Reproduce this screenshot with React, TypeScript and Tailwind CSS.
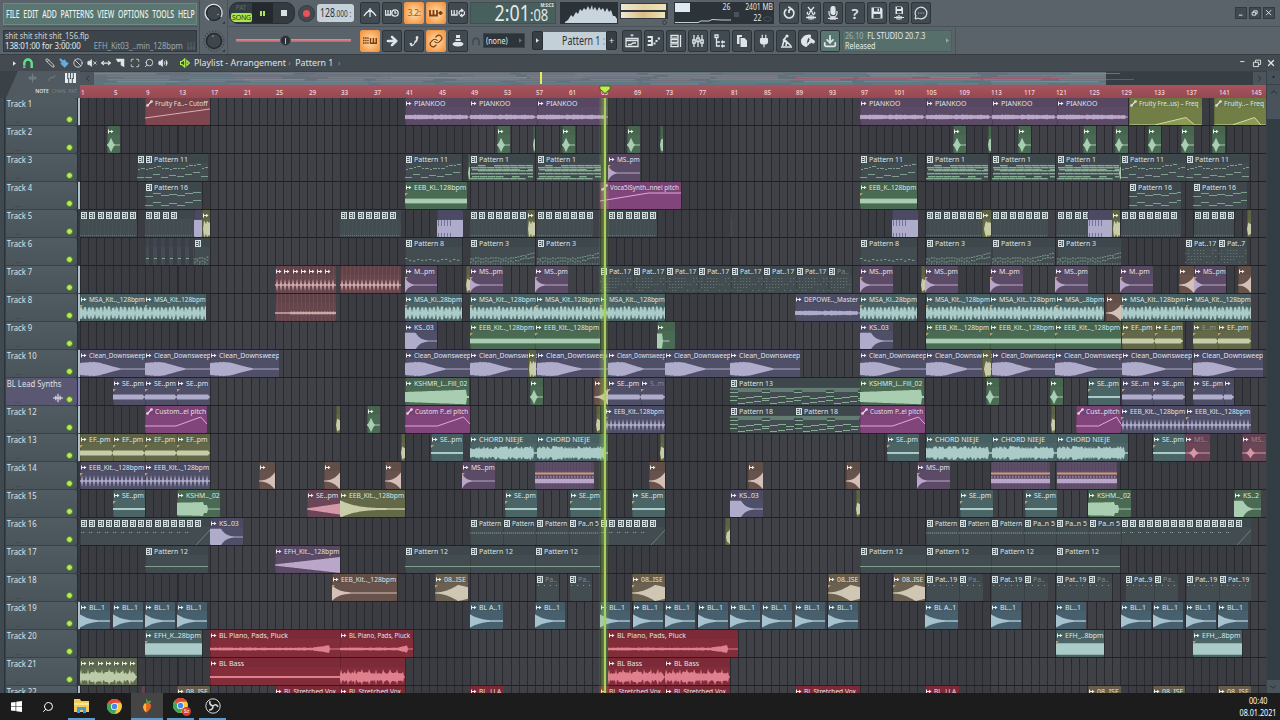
import { ReactNode } from 'react'
import clsx from 'clsx'
import {
  ArrowRight, Ban, ChevronDown, ChevronLeft, ChevronRight, ChevronUp, Download,
  Link, Maximize, MessageCircleMore, MoveHorizontal, Paintbrush, Pencil, Plug,
  Pointer, Search, VolumeX, Volume2, X,
} from 'lucide-react'

type Color = 'pat' | 'violet' | 'lav' | 'green' | 'teal' | 'olive' | 'moss' | 'brown' | 'sand' | 'magenta' | 'red' | 'steel' | 'rose' | 'dusk' | 'plum' | 'lime'
// x, width, colour, shape, label, number of icons
type Clip = [number, number, Color, string, string?, number?]

const ORIGIN = 80

const BG: Record<Color, string> = {
  pat: 'bg-[#424c51]',
  violet: 'bg-[#5c4b66]',
  lav: 'bg-[#504f68]',
  green: 'bg-[#4b6a53]',
  teal: 'bg-[#4b6567]',
  olive: 'bg-[#636849]',
  moss: 'bg-[#606c51]',
  brown: 'bg-[#67534b]',
  sand: 'bg-[#6b6151]',
  magenta: 'bg-[#81457c]',
  red: 'bg-[#832d3b]',
  steel: 'bg-[#48606d]',
  rose: 'bg-[#7f464f]',
  dusk: 'bg-[#66464c]',
  plum: 'bg-[#6b4656]',
  lime: 'bg-[#717e45]',
}

const INK: Record<Color, string> = {
  pat: '#86a893',
  violet: '#b9a6c8',
  lav: '#aeabcb',
  green: '#a8cdb0',
  teal: '#abcbc8',
  olive: '#c8cca8',
  moss: '#bccaa8',
  brown: '#d4c0b6',
  sand: '#cfc6b4',
  magenta: '#dcaadb',
  red: '#e0808e',
  steel: '#a6c2cf',
  rose: '#dcaeb2',
  dusk: '#cfa8aa',
  plum: '#d498a8',
  lime: '#d5dba8',
}

const P11 = 'Pattern 11'
const P12 = 'Pattern 12'
const EEB = 'EEB_Kit.._128bpm'
const MSA = 'MSA_Kit.._128bpm'
const CLEAN = 'Clean_Downsweep'
const PIANO = 'BL Piano, Pads, Pluck'
const VOX = 'BL Stretched Vox'

const greens = (xs: number[]): Clip[] => xs.map((x) => [x, 13, 'green', 'burst', ''])
const slivers = (xs: number[]): Clip[] => xs.map((x) => [x, 4, 'olive', 'sliver'])
const same = (xs: [number, number][], c: Color, s: string, label: string): Clip[] => xs.map(([x, w]) => [x, w, c, s, label])

const tracks: { name: string; lit?: boolean; clips: Clip[] }[] = [
  {
    name: 'Track 1', lit: true,
    clips: [
      [145, 65, 'rose', 'ramp', 'Fruity Fa..– Cutoff'],
      ...same([[405, 65], [470, 67], [537, 71], [860, 66], [926, 66], [992, 65], [1057, 71]], 'violet', 'band', 'PIANKOO'),
      [1129, 73, 'lime', 'peak', 'Fruity Fre..us) – Freq'],
      [1214, 52, 'lime', 'peak', 'Fruity..– Freq'],
    ],
  },
  {
    name: 'Track 2',
    clips: [
      ...greens([107, 497, 562, 627, 953, 1018, 1083, 1115, 1148, 1181, 1212]),
      [533, 2, 'green', 'sliver'], [660, 3, 'green', 'sliver'], [988, 3, 'green', 'sliver'],
    ],
  },
  {
    name: 'Track 3',
    clips: [
      [137, 8, 'pat', 'melody', '', 1],
      ...same([[145, 63], [405, 57], [860, 57], [1121, 65], [1186, 63]], 'pat', 'melody', P11),
      [468, 2, 'green', 'sliver'], [1119, 2, 'green', 'sliver'],
      ...same([[470, 63], [537, 64], [926, 62], [992, 63], [1057, 62]], 'pat', 'chords', 'Pattern 1'),
      [608, 32, 'violet', 'decay', 'MS..pm'],
    ],
  },
  {
    name: 'Track 4', lit: true,
    clips: [
      ...same([[145, 57], [1129, 52], [1193, 54]], 'pat', 'waltz', 'Pattern 16'),
      [405, 62, 'green', 'comb2', 'EEB_Ki..128bpm'],
      [600, 81, 'magenta', 'rise', 'Voca5lSynth..nnel pitch'],
      [860, 57, 'green', 'comb2', 'EEB_K..128bpm'],
    ],
  },
  {
    name: 'Track 5',
    clips: [
      [80, 57, 'pat', 'steps', '', 7], [145, 49, 'pat', 'steps', '', 4], [194, 8, 'lav', 'full'], [202, 8, 'olive', 'sliver', ''],
      [340, 61, 'pat', 'steps', '', 7], [437, 26, 'lav', 'full'], [470, 57, 'pat', 'steps', '', 7], [527, 8, 'olive', 'sliver', ''],
      [537, 56, 'pat', 'steps', '', 7], [608, 49, 'pat', 'steps', '', 6], [730, 2, 'pat', 'none'], [892, 26, 'lav', 'full'],
      [926, 56, 'pat', 'steps', '', 7], [982, 9, 'olive', 'sliver', ''], [992, 56, 'pat', 'steps', '', 7], [1057, 31, 'pat', 'steps', '', 4],
      [1088, 24, 'lav', 'full'], [1112, 8, 'olive', 'sliver', ''], [1121, 60, 'pat', 'steps', '', 7], [1194, 40, 'pat', 'steps', '', 5],
      [1247, 4, 'olive', 'sliver'],
    ],
  },
  {
    name: 'Track 6',
    clips: [
      [145, 49, 'pat', 'stripes'], [194, 16, 'pat', 'arp', '', 1],
      [405, 57, 'pat', 'low', 'Pattern 8'], [860, 57, 'pat', 'low', 'Pattern 8'],
      ...same([[470, 65], [537, 63], [926, 65], [992, 63], [1057, 64]], 'pat', 'arp', 'Pattern 3'),
      [1185, 33, 'pat', 'dots', 'Pat..17'], [1218, 29, 'pat', 'dots', 'Pat..7'],
    ],
  },
  {
    name: 'Track 7', lit: true,
    clips: [
      [275, 61, 'dusk', 'ticks', '', 7], [340, 61, 'dusk', 'ticks'],
      [405, 32, 'violet', 'decay', 'M..pm'], ...slivers([466, 921]),
      ...same([[470, 33], [535, 33], [860, 33], [925, 33], [1055, 33], [1194, 32]], 'violet', 'decay', 'MS..pm'),
      ...same([[990, 33], [1120, 33]], 'violet', 'decay', 'M..pm'),
      ...same([[600, 33], [633, 33], [666, 32], [698, 33], [731, 32], [763, 33], [796, 32]], 'pat', 'dots', 'Pat..17'),
      [828, 24, 'pat', 'dots', '~Pa..'],
      [1179, 15, 'brown', 'grow', ''], [1238, 13, 'brown', 'grow', ''],
    ],
  },
  {
    name: 'Track 8', lit: true,
    clips: [
      ...same([[80, 65], [470, 66], [600, 65], [926, 64], [1186, 65]], 'teal', 'drum', MSA),
      ...same([[145, 61], [536, 64], [990, 66], [1121, 65]], 'teal', 'drum', 'MSA_Kit..128bpm'),
      ...same([[405, 57], [860, 57]], 'teal', 'drum', 'MSA_Ki..28bpm'),
      [275, 61, 'dusk', 'beads'], [795, 65, 'lav', 'band', 'DEPOWE.._Master'],
      [1056, 48, 'teal', 'drum', 'MSA_..8bpm'], [1106, 15, 'brown', 'grow', ''],
    ],
  },
  {
    name: 'Track 9',
    clips: [
      [405, 32, 'lav', 'blob', 'KS..03'], [860, 33, 'lav', 'blob', 'KS..03'],
      ...same([[470, 65], [535, 65], [926, 64], [990, 65], [1055, 66]], 'green', 'comb2', EEB),
      [657, 18, 'green', 'hit', ''],
      [1122, 33, 'olive', 'comb', 'EF..pm'], [1155, 28, 'olive', 'comb', 'E..pm'], [1193, 25, 'olive', 'comb', '~E..m'], [1218, 33, 'olive', 'comb', 'EF..pm'],
    ],
  },
  {
    name: 'Track 10', lit: true,
    clips: [
      ...same([[80, 65], [145, 65], [210, 69], [405, 65], [470, 67], [537, 71], [608, 57], [665, 65], [730, 70], [860, 66], [926, 66], [992, 63], [1055, 67], [1122, 70], [1193, 70]], 'lav', 'down', CLEAN),
      [528, 8, 'olive', 'sliver', ''], [982, 9, 'olive', 'sliver', ''],
    ],
  },
  {
    name: 'BL Lead Synths', lit: true,
    clips: [
      ...same([[113, 32], [145, 32], [177, 33], [608, 33], [1153, 32], [1193, 31]], 'lav', 'comb', 'SE..pm'),
      [641, 24, 'lav', 'comb', '~S..m'], [1122, 31, 'lav', 'comb', 'SE..m'], [1224, 10, 'lav', 'comb', ''],
      [405, 64, 'green', 'block', 'KSHMR_L..Fill_02'], [860, 64, 'green', 'block', 'KSHMR_L..Fill_02'],
      ...greens([530, 986, 1050]), [594, 14, 'brown', 'grow', ''],
      [730, 130, 'pat', 'bars', 'Pattern 13'], [1088, 32, 'teal', 'thin', 'SE..pm'],
    ],
  },
  {
    name: 'Track 12', lit: true,
    clips: [
      [145, 62, 'magenta', 'pitch', 'Custom..el pitch'], [405, 65, 'magenta', 'pitch', 'Custom P..el pitch'],
      [860, 65, 'magenta', 'pitch', 'Custom P..el pitch'], [1076, 45, 'magenta', 'pitch', 'Cust..pitch'],
      ...slivers([336, 596, 1051]), ...greens([367]),
      [605, 60, 'lav', 'ticks', 'EEB_Kit..128bpm'], [1121, 65, 'lav', 'ticks', EEB], [1186, 65, 'lav', 'ticks', EEB],
      [730, 65, 'pat', 'bars', 'Pattern 18'], [795, 65, 'pat', 'bars', 'Pattern 18'],
    ],
  },
  {
    name: 'Track 13', lit: true,
    clips: [
      ...same([[80, 33], [113, 32], [145, 32], [177, 33]], 'olive', 'comb', 'EF..pm'),
      ...slivers([401, 660]),
      ...same([[431, 32], [887, 32], [1153, 32]], 'teal', 'thin', 'SE..pm'),
      ...same([[470, 67], [537, 71], [926, 66], [992, 65], [1057, 71]], 'teal', 'noise', 'CHORD NIEJE'),
      [1185, 25, 'plum', 'blip', '~MS..'], [1242, 24, 'plum', 'blip', '~MS..'],
    ],
  },
  {
    name: 'Track 14',
    clips: [
      [80, 65, 'lav', 'ticks', EEB], [145, 65, 'lav', 'ticks', EEB],
      ...same([[259, 16], [324, 16], [385, 16], [649, 16], [748, 15], [846, 14]], 'brown', 'grow', ''),
      [462, 33, 'violet', 'decay', 'MS..pm'], [917, 33, 'violet', 'decay', 'MS..pm'],
      [535, 59, 'violet', 'double'], [991, 59, 'violet', 'double'], [1057, 60, 'violet', 'double'],
    ],
  },
  {
    name: 'Track 15',
    clips: [
      ...same([[113, 32], [505, 32], [570, 31], [632, 33], [960, 33], [1025, 32]], 'teal', 'thin', 'SE..pm'),
      [177, 43, 'green', 'slab', 'KSHM.._02'], [307, 33, 'plum', 'swell', 'SE..pm'], [340, 65, 'olive', 'fall', EEB],
      [730, 33, 'lav', 'blob', 'KS..03'], ...slivers([856]), [1088, 43, 'green', 'slab', 'KSHM.._02'], [1234, 27, 'green', 'blob', 'KS..2'],
    ],
  },
  {
    name: 'Track 16',
    clips: [
      [80, 130, 'pat', 'slide', '', 15], [210, 33, 'lav', 'blob', 'KS..03'],
      ...same([[470, 33], [503, 33], [536, 33], [926, 33], [959, 32], [991, 33]], 'pat', 'dotline', 'Pattern'),
      ...same([[569, 31], [1024, 32], [1056, 33], [1089, 32]], 'pat', 'dotline', 'Pa..n 5'),
      [600, 65, 'pat', 'slide', '', 7], [725, 5, 'olive', 'sliver'], [1121, 130, 'pat', 'slide', '', 15],
    ],
  },
  {
    name: 'Track 17',
    clips: [
      ...same([[145, 63], [405, 65], [470, 65], [535, 65], [860, 66], [926, 65], [991, 65], [1056, 64]], 'pat', 'line', P12),
      [275, 65, 'violet', 'cresc', 'EFH_Kit.._128bpm'],
    ],
  },
  {
    name: 'Track 18',
    clips: [
      [332, 65, 'brown', 'decay', EEB],
      ...same([[435, 33], [632, 33], [828, 32], [893, 32]], 'sand', 'lens', '08..ISE'),
      ...same([[536, 23], [569, 23], [959, 24], [1024, 24], [1088, 24], [1154, 24]], 'pat', 'sparse', '~Pa..'),
      ...same([[926, 33], [991, 33], [1056, 32], [1186, 33], [1219, 32]], 'pat', 'sparse', 'Pat..19'),
      [1125, 29, 'pat', 'sparse', 'Pat..9'],
    ],
  },
  {
    name: 'Track 19', lit: true,
    clips: [
      ...[80, 113, 145, 177, 535, 600, 633, 665, 698, 730, 762, 795, 828, 991, 1056, 1121, 1153, 1186, 1218].map((x): Clip => [x, 30, 'steel', 'stab', 'BL..1']),
      [470, 33, 'steel', 'stab', 'BL A..1'], [925, 33, 'steel', 'stab', 'BL A..1'],
    ],
  },
  {
    name: 'Track 20',
    clips: [
      [145, 57, 'teal', 'solid', 'EFH_K..28bpm'], [210, 130, 'red', 'tail', PIANO], [340, 73, 'red', 'tail', PIANO], [608, 130, 'red', 'tail', PIANO],
      [1056, 48, 'teal', 'solid', 'EFH_..8bpm'], [1193, 49, 'teal', 'solid', 'EFH_..8bpm'],
    ],
  },
  {
    name: 'Track 21',
    clips: [
      [80, 57, 'moss', 'bass', '', 7], [210, 130, 'red', 'thin', 'BL Bass'], [340, 65, 'red', 'bass'],
      [608, 57, 'red', 'bass', 'BL Bass'], [665, 65, 'red', 'bass', 'BL Bass'],
    ],
  },
  {
    name: 'Track 22', lit: true,
    clips: [
      [141, 4, 'plum', 'none'], ...same([[177, 33], [1088, 33], [1153, 32], [1218, 33]], 'sand', 'none', '08..ISE'),
      ...same([[275, 65], [340, 65], [600, 65], [665, 65], [795, 65]], 'red', 'none', VOX),
      ...same([[470, 34], [925, 34]], 'red', 'none', 'BL..LLA'),
    ],
  },
]

const rnd = (i: number) => {
  const v = Math.sin(i * 12.9898) * 43758.5453
  return v - Math.floor(v)
}

// amplitude of each wave form, t runs from 0 to 1 over the clip
function level(shape: string, t: number, i: number, w: number): number {
  switch (shape) {
    case 'band': return t * w > w - 3 ? 0.5 : 1.6 + rnd(i) * 0.9
    case 'comb': return t * w > w - 2 ? 0.8 : i % 2 ? 3 : 1.9
    case 'comb2': return i % 2 ? 2.8 : 2.1
    case 'burst': return t < 0.34 ? (t / 0.34) ** 1.5 * 8 + 0.4 : Math.max(0.5, 8 * Math.exp(-(t - 0.34) * 8) - 0.3)
    case 'blip': return Math.max(0.5, 6 * Math.exp(-Math.abs(t - 0.35) * 12))
    case 'sliver': return t < 0.25 ? 0 : 4 + rnd(i + w) * 4
    case 'decay': return Math.max(0.6, 8 * Math.exp(-t * 9))
    case 'stab': return Math.max(0.7, 7 * Math.exp(-t * 3.2) - 0.2)
    case 'drum': return i % 8 === 7 ? 0.8 : i % 4 === 3 ? 2.2 : 5 + rnd(i + w) * 2
    case 'ticks': return i % 4 === 2 ? 6 : 0.7
    case 'beads': return i % 3 && t > 0.25 ? 1.6 : 0.8
    case 'grow': return Math.min(8.5, 0.6 + 8 * t ** 2.6)
    case 'blob': return t < 0.34 ? 8.2 : Math.max(0.6, 8 * Math.exp(-(t - 0.34) * 7))
    case 'hit': return t < 0.28 ? 7.5 : t < 0.7 ? 0.5 : 0
    case 'down': return t < 0.28 ? 5.6 + Math.sin(t * 9) * 0.9 + rnd(i) * 0.7 : t < 0.62 ? 6.2 * (1 - (t - 0.28) / 0.36) ** 1.1 + 0.5 : 0.5
    case 'block': return t > 0.96 ? 1 : 5 + t * 2.4
    case 'slab': return t < 0.62 ? 6.3 + t : t < 0.7 ? 4 : 0.6
    case 'thin': return 1
    case 'noise': return t > 0.95 ? 0.8 : 3.6 + rnd(i * 3 + w) * 3.6
    case 'bass': return t > 0.97 ? 0.8 : i % 7 === 1 ? 8 : 2.4 + rnd(i * 3 + w) * 3.2
    case 'swell': return 0.6 + t * 5
    case 'fall': return 8 * (1 - t) ** 4 + 0.8
    case 'cresc': return 0.6 + t * 7.4
    case 'lens': return t < 0.7 ? 0.6 + 7.5 * (t / 0.7) ** 2 : 8.1 - (t - 0.7) * 8
    case 'solid': return i % 2 ? 6 : 5.4
    case 'tail': return t > 0.92 ? 0.6 : 1 + rnd(i) * 0.6 + Math.max(0, t - 0.78) * 18
    case 'full': return 8.5
  }
  return 0
}

function wavePath(shape: string, w: number) {
  const top: string[] = []
  const bottom: string[] = []
  for (let i = 0; i <= w; i++) {
    const a = level(shape, i / w, i, w)
    top.push(`${i} ${(19 - a).toFixed(1)}`)
    bottom.unshift(`${i} ${(19 + a).toFixed(1)}`)
  }
  return `M${top.join('L')}L${bottom.join('L')}Z`
}

function notes(shape: string, w: number): [number, number, number][] {
  const out: [number, number, number][] = []
  const add = (x: number, y: number, len: number) => {
    if (x < w - 1) out.push([x, y, Math.min(len, w - x)])
  }
  switch (shape) {
    case 'melody':
      for (let k = 0; k * 8 < w; k++) {
        add(k * 8 + 1, 16 - [1, 3, 2, 1, 2, 4, 5, 2][k % 8], 2)
        add(k * 8 + 4, 15 - [1, 3, 1, 1, 1, 4, 5, 2][k % 8], 4)
        add(k * 8, [23, 20, 23, 21, 22, 20, 18, 22][k % 8], 7)
      }
      break
    case 'waltz':
      for (let k = 0; k * 8 < w; k++) {
        add(k * 8, [14, 11, 13, 12, 13, 11, 10][k % 7], 8)
        add(k * 8, [23, 20, 23, 21, 23, 20, 18][k % 7], 8)
      }
      break
    case 'chords':
      for (let r = 0; r < 7; r++) for (let k = 0; k * 8 < w; k++) if (rnd(r * 9 + k) > 0.14) add(k * 8 + (r % 3), 11 + [0, 2, 4, 5, 8, 11, 13][r], 7.6)
      break
    case 'bars':
      add(0, 10.5, w)
      for (let k = 0; k * 8 < w; k++) {
        add(k * 8, k % 4 ? 12.5 : 14, 8)
        add(k * 8, 18 + ((k * 2) % 3), 8)
        add(k * 8, 23 + ((k * 3) % 4) - 1, 7)
      }
      break
    case 'arp':
      for (let k = 0; k * 2.5 < w; k++) {
        const lift = (k * 2.5) / w > 0.66 ? ((k * 2.5) / w - 0.66) * 16 : 0
        add(k * 2.5, 23.5 - (rnd(k) > 0.5 ? 1 : 0) - lift, 1.8)
        add(k * 2.5, 19.5 + (rnd(k + 40) > 0.5 ? 1 : 0) - lift, 1.8)
        add(k * 2.5, 25.5, 1)
      }
      break
    case 'low':
      for (let k = 0; k * 4 < w; k++) add(k * 4, 21 + (k % 3) * 0.8 - (k % 5 ? 0 : 1), 2.4)
      break
    case 'dots':
      for (let r = 0; r < 5; r++) for (let k = 0; k * 3 < w; k++) if (rnd(r * 17 + k) > 0.35) add(k * 3, 12 + r * 3, 1.3)
      break
    case 'sparse':
      for (let k = 0; k * 6 < w; k++) add(k * 6 + 2, 11, 1)
      break
    case 'dotline':
      for (let k = 0; k * 2 < w; k++) add(k * 2, 14.5, 1.3)
      break
    case 'slide':
      for (let k = 0; k * 8 < w - 20; k++) {
        add(k * 8 + 1, 14, 1.2)
        add(k * 8 + 3, 14, 1.2)
      }
      break
    case 'steps':
      for (let k = 0; k * 2 < w; k++) add(k * 2, 25, 1)
      break
    case 'line':
      add(0, 20, w)
      break
  }
  return out
}

function Shape({ shape, w, color }: { shape: string; w: number; color: Color }) {
  const ink = shape === 'chords' || shape === 'bars' ? '#8cb898' : INK[color]
  const lines: Record<string, string> = {
    ramp: `M0 20L${w} 11`,
    rise: `M0 19L${w * 0.6} 11H${w}`,
    pitch: `M0 20H${w * 0.5}L${w * 0.9} 11L${w} 18`,
    peak: `M0 27H${w * 0.35}L${w * 0.78} 19.5L${w * 0.9} 27H${w}`,
    slide: `M${w - 14} 27L${w} 12`,
  }
  return (
    <svg className="block" width={w} height={27} viewBox={`0 0 ${w} 27`}>
      {shape === 'steps' && <path d={Array.from({ length: Math.floor(w / 4) }, (_, i) => `M${i * 4 + 0.5} 9V27`).join('')} stroke="#485357" strokeWidth={0.7} />}
      {shape === 'stripes' && Array.from({ length: 6 }, (_, i) => (
        <g key={i}>
          <rect x={i * 8 + 4} width={4} height={27} fill="#3d3e4a" />
          <rect x={i * 8 + 1} y={20} width={3} height={1} fill={ink} />
        </g>
      ))}
      {color === 'dusk' && <path d={Array.from({ length: w / 4 }, (_, i) => `M${i * 4 + 2.5} 0V27`).join('')} stroke="#734f54" strokeWidth={0.8} />}
      {shape === 'full' && <path d={`M0 10H${w}V27H0Z`} fill={ink} />}
      {shape === 'full' && w > 20 && <path d={Array.from({ length: 5 }, (_, i) => `M${i * 3 + 1.5} 10V16M${i * 3 + 1.5} 23V27`).join('')} stroke="#74739a" />}
      {shape === 'double' && (
        <>
          <path d={Array.from({ length: w / 3 }, (_, i) => `M${i * 3 + 1} 0V27`).join('')} stroke="#6d5a78" strokeWidth={0.8} />
          <path d={`M0 11.5H${w}`} stroke="#d29772" strokeWidth={2.2} />
          <path d={`M0 15H${w}`} stroke={ink} strokeWidth={1} strokeDasharray="1.5 1.5" />
          <path d={`M0 19H${w}`} stroke={ink} strokeWidth={4.4} />
        </>
      )}
      {shape === 'peak' && <path d={lines.peak} fill="#8c9a55" />}
      {lines[shape] && <path d={lines[shape]} stroke={ink} fill="none" strokeWidth={shape === 'slide' ? 0.6 : 1} />}
      {shape !== 'full' && <path d={wavePath(shape, w)} fill={ink} />}
      {notes(shape, w).map(([x, y, len], i) => (
        <rect key={i} x={x} y={y} width={len} height={shape === 'chords' ? 1.4 : 1} fill={ink} opacity={shape === 'dots' || shape === 'steps' ? 0.45 : 0.9} />
      ))}
    </svg>
  )
}

function ClipIcon({ color, shape }: { color: Color; shape: string }) {
  if (color === 'pat') {
    return (
      <svg className="w-[6px] h-[7px] shrink-0" viewBox="0 0 6 7">
        <path d="M0 0H6V7H0Z" fill="#d5e0e2" />
        <path d="M1 1.5H3M1 3.5H3M1 5.5H3M4.3 1V6" stroke="#37434a" strokeWidth={0.9} />
      </svg>
    )
  }
  if (['ramp', 'rise', 'pitch', 'peak'].includes(shape)) {
    return (
      <svg className="w-[7px] h-[7px] shrink-0" viewBox="0 0 7 7" fill="none" stroke="#eee3ea" strokeWidth={1.1}>
        <circle cx={1.5} cy={5.5} r={0.8} /><circle cx={5.5} cy={1.5} r={0.8} /><path d="M2 5L5 2" />
      </svg>
    )
  }
  return (
    <svg className="w-[6px] h-[5px] shrink-0" viewBox="0 0 6 5" fill="#e8edee">
      <path d="M0 0.5H1V4.5H0ZM1 2H3V3H1ZM3 0.7L5.5 2.5L3 4.3Z" />
    </svg>
  )
}

// rough width of a label at 7.5px
const textWidth = (s: string) =>
  [...s].reduce((sum, c) => sum + (/[.,:ilIj ]/.test(c) ? 2 : /[rtf()–_]/.test(c) ? 3.1 : /[MWmD]/.test(c) ? 6.3 : /[A-Z]/.test(c) ? 4.7 : 4.35), 0)

function TrackClip({ clip }: { clip: Clip }) {
  const [x, w, color, shape, label, count = 1] = clip
  const faded = label?.startsWith('~')
  const text = label?.replace('~', '') ?? ''
  const scale = Math.max(0.74, Math.min(0.93, (w - 10) / textWidth(text)))
  return (
    <div className={clsx('absolute top-0 h-[27px] overflow-hidden rounded-[1px] shadow-[inset_1px_0_0_rgba(0,0,0,.15)]', BG[color])} style={{ left: x - ORIGIN, width: w }}>
      <div className="absolute inset-x-0 top-0 h-[9px] bg-black/5" />
      <div className="absolute left-0 top-0"><Shape shape={shape} w={w} color={color} /></div>
      {label !== undefined && (
        <div className="relative flex items-center h-[10px] pl-[1.5px] gap-[2.15px]">
          {Array.from({ length: count }, (_, i) => <ClipIcon key={i} color={color} shape={shape} />)}
          {text && (
            <span className={clsx('text-[7.5px] leading-[10px] whitespace-nowrap origin-left', faded ? 'text-white/35' : 'text-[#dfe5e6]')} style={{ transform: `scaleX(${scale})` }}>
              {text}
            </span>
          )}
        </div>
      )}
      {['drum', 'decay', 'comb', 'comb2', 'thin', 'ticks', 'solid', 'lens'].includes(shape) && text && color !== 'red' && (
        <div className="absolute left-0 top-[11px] border-t-[3px] border-r-[3px] border-t-[#c79a5f] border-r-transparent" />
      )}
    </div>
  )
}

function Btn({ children, on }: { children: ReactNode; on?: boolean }) {
  return (
    <div className={clsx('w-5 h-[22px] shrink-0 rounded-[2px] border flex items-center justify-center [&>svg]:w-[14px] [&>svg]:h-[14px]',
      on ? 'bg-[radial-gradient(#ffe2b0,#f48f3a)] border-[#f19a4c] text-[#7c3d10]' : 'bg-[#414a50] border-[#2d343a] text-[#dfe5e8]')}>
      {children}
    </div>
  )
}

function Ico({ d, fill }: { d: string; fill?: boolean }) {
  return (
    <svg viewBox="0 0 14 14" fill={fill ? 'currentColor' : 'none'} stroke={fill ? 'none' : 'currentColor'} strokeWidth={1.3} fillRule="evenodd">
      <path d={d} />
    </svg>
  )
}

function Arch({ className }: { className: string }) {
  return (
    <svg className={className} viewBox="0 0 10 10" fill="none" stroke="currentColor" strokeWidth={2.4}>
      <path d="M1.3 10V5.2A3.7 3.7 0 0 1 8.7 5.2V10" strokeDasharray="1.6 0.7 30" />
    </svg>
  )
}

function Triangle({ className }: { className: string }) {
  return <svg className={className} viewBox="0 0 4 6" fill="currentColor"><path d="M0 0L4 3L0 6Z" /></svg>
}

function Knob({ ring }: { ring?: boolean }) {
  return (
    <svg className="w-6 h-6" viewBox="0 0 24 24">
      {!ring && <circle cx={12} cy={12} r={10} fill="none" stroke="#353d43" strokeWidth={1.2} strokeDasharray="1 2" />}
      <circle cx={12} cy={12} r={7.5} fill="#3f474d" stroke="#252b30" strokeWidth={1.6} />
      {ring && <path d="M7 19A8.5 8.5 0 1 1 19 16" fill="none" stroke="#dde4e7" strokeWidth={1.3} />}
      <circle cx={ring ? 16 : 11} cy={ring ? 13.5 : 7} r={0.8} fill="#9aa6ab" />
      <path d="M23 20V23H20Z" fill="#343c42" />
    </svg>
  )
}

function TopBar() {
  return (
    <div className="flex h-[54px] bg-[#5a636a] text-[#e3e9eb]">
      <div className="w-[200px] shrink-0 pl-[3px] pr-[2px] border-r border-[#474f56]">
        <div className="h-[27px] pt-[3px] border-b border-[#4a5359]">
          <div className="h-[22px] bg-[#5a7671] border border-[#6e8883] flex items-center pl-[2px]">
            <div className="text-[11px] whitespace-nowrap origin-left scale-x-[0.625] flex gap-[6px] text-[#eaf1ef] font-medium">
              {['FILE', 'EDIT', 'ADD', 'PATTERNS', 'VIEW', 'OPTIONS', 'TOOLS', 'HELP'].map((m) => <span key={m}>{m}</span>)}
            </div>
          </div>
        </div>
        <div className="mt-[3px] h-[22px] bg-[#3d454b] border border-[#31383e] px-[1px] text-[8.5px] leading-[10px] tracking-[-0.1px]">
          <div className="text-[#c9d1d4] whitespace-nowrap origin-left scale-x-[0.9]">shit shit shit shit_156.flp</div>
          <div className="flex justify-between items-center whitespace-nowrap">
            <span className="origin-left scale-x-[0.93]">138:01:00 for 3:00:00</span>
            <span className="flex items-center text-[#9ca6ab] -ml-3"><span className="origin-right scale-x-[0.91]">EFH_Kit03_..min_128bpm</span>
              <svg className="w-2 h-2 ml-1 text-[#58626a]" viewBox="0 0 8 8" stroke="currentColor"><path d="M1 0V8M4 0V8M7 0V8M0 6H8" /></svg>
            </span>
          </div>
        </div>
      </div>
      <div className="w-7 flex flex-col items-center justify-between py-px border-r border-[#4a5359]">
        <Knob ring /><Knob />
      </div>

      <div className="flex-1">
        <div className="flex items-center h-[27px] border-b border-[#4a5359]">
          <div className="ml-px flex h-[22px] w-[66px] rounded-[9px] overflow-hidden bg-[#343c41] border border-[#2a3035]">
            <div className="w-[22px] text-center text-[6.5px] leading-[10px] tracking-[-0.2px]">
              <div className="text-[#606b70]">PAT</div>
              <div className="h-[9px] leading-[9px] bg-[#a6e84c] text-[#26330e] rounded-[2px] ml-px text-[7px]">SONG</div>
            </div>
            <div className="w-[21px] bg-[#23292d] flex items-center justify-center gap-[1px]">
              <div className="w-[2px] h-[5px] bg-[#a9ed4d]" /><div className="w-[2px] h-[5px] bg-[#a9ed4d]" />
            </div>
            <div className="flex-1 flex items-center justify-center"><div className="w-[6px] h-[6px] bg-[#dbe1e3]" /></div>
          </div>
          <div className="ml-[3px] w-[17px] h-[17px] rounded-full bg-[#424a50] border border-[#343b41] flex items-center justify-center">
            <div className="w-[7px] h-[7px] rounded-full bg-[#ed5158]" />
          </div>
          <div className="ml-[2px] w-[37px] h-[18px] rounded-[3px] bg-[#c6d2da] text-[#2c343b] flex items-center justify-center">
            <span className="text-[12px] scale-x-[0.72] whitespace-nowrap">128<span className="text-[9px]">.000 :</span></span>
          </div>
          <div className="ml-[6px] flex gap-[2px]">
            <Btn><Ico d="M1 10Q4 5 7 5Q10 5 13 10M7 2V11M5 4.5H9" /></Btn>
            <Btn><svg viewBox="0 0 14 14" fill="none" stroke="currentColor" strokeWidth={1.3}><path d="M0.5 4V9H5.5V4M3 4V9" /><circle cx={10} cy={7} r={3.2} /><path d="M10 5V7H11.5" /></svg></Btn>
            <Btn on><span className="text-[9px] -tracking-[0.5px] text-[#a5570f]">3.2:</span></Btn>
            <Btn on><svg viewBox="0 0 14 14" fill="none" stroke="currentColor" strokeWidth={1.8}><path d="M1 4V9.5H8V4M4.5 4V9M9.5 7H13.5M11.5 5V9" /></svg></Btn>
            <Btn><Ico d="M0.5 4V9H6V4M3.2 4V9M8.5 8.5A2.6 2.6 0 0 1 11 4.5M13 5.5A2.6 2.6 0 0 1 10 9.5M10 3L12 4.5L10.5 6M11 8L9.5 9.5L11.5 11" /></Btn>
          </div>
          <div className="ml-[2px] w-[86px] h-[22px] bg-[#48605d] border border-[#3f524f] flex items-center justify-end relative">
            <span className="text-[22px] leading-[22px] whitespace-nowrap origin-right scale-x-[0.81] mr-[7px]">2:01<span className="text-[16px]">:08</span></span>
            <span className="absolute right-px top-[-1px] text-[4.5px] leading-[6px] font-bold scale-x-90 origin-right">M:S:CS</span>
          </div>
          <svg className="ml-[4px] w-[58px] h-[22px] bg-[#2c3338]" viewBox="0 0 58 22">
            <path d="M5 21V20L8 18L11 13L13 15L16 10L18 12L20 7L22 9L24 6L26 8L28 4L30 8L32 3L33 8L35 5L37 9L39 5L41 8L43 6L45 10L47 6L49 10L51 8L53 14L55 14L57 17V21Z" fill="#c9d5dc" />
          </svg>
          <div className="ml-[2px] w-[50px] h-[22px] pt-px">
            <div className="bg-[#343b40] p-px w-[48px]">
              <div className="h-[6px] w-[45px] bg-linear-to-r from-[#eee8d4] via-[#e6d3a0] to-[#efe4b7]" />
              <div className="mt-[2px] h-[6px] w-[44px] bg-linear-to-r from-[#eee8d4] via-[#dcbd84] to-[#efe4b7]" />
            </div>
            <div className="ml-auto mr-[3px] mt-px w-[5px] h-[5px] rounded-full border border-[#353d43]" />
          </div>
          <div className="ml-[4px] w-[100px] h-[22px] bg-[#2c3339] relative text-[9px] leading-[10px] text-right">
            <svg className="absolute inset-0" width={100} height={22}>
              <path d="M1 1H16V10H1Z" fill="#e0eaf0" />
              <path d="M1 20.5H24L27 19H35L38 17.5L48 18L50 18H57" stroke="#c3ced3" fill="none" />
              <path d="M60 10H65V15H60Z" fill="#495359" />
              <ellipse cx={93.5} cy={17} rx={4} ry={2.2} fill="none" stroke="#49545a" />
            </svg>
            <span className="absolute right-[44px] top-0 origin-right scale-x-75">26</span>
            <span className="absolute right-px top-0 origin-right scale-x-75 whitespace-nowrap">2401 MB</span>
            <span className="absolute right-[13px] top-[11px] origin-right scale-x-75">22</span>
          </div>
          <div className="ml-[5px] flex gap-[2px]">
            <Btn><svg viewBox="0 0 14 14" fill="none" stroke="currentColor" strokeWidth={1.7}><path d="M8.5 2.6A4.8 4.8 0 1 1 4.5 3.2M7 7V4M6.3 0.8L9.3 2.8L6.5 4.8" /></svg></Btn>
            <Btn><Ico d="M4 1L8.5 6.5M10 1L5.5 6.5M5.5 6.5A1.2 1.2 0 1 1 4 6M8.5 6.5A1.2 1.2 0 1 0 10 6M2 11.5H12M5 9.5V13.5M7 9V14M9 9.5V13.5" /></Btn>
            <Btn><svg viewBox="0 0 14 14" fill="none" stroke="currentColor" strokeWidth={1.2}><rect x={5} y={0.5} width={4} height={8} rx={2} fill="currentColor" /><path d="M3 5V7A4 4 0 0 0 11 7V5M2 12.3H12M5 10.5V14M7 10V14M9 10.5V14" /></svg></Btn>
            <Btn><span className="text-[15px] leading-none font-semibold">?</span></Btn>
            <Btn><Ico fill d="M1.5 1.5H11L12.5 3V12.5H1.5ZM4 2V5.5H10V2ZM3.5 8V12H10.5V8ZM7.5 2.5H9V5H7.5Z" /></Btn>
            <Btn><svg viewBox="0 0 14 14" fill="currentColor" fillRule="evenodd"><path d="M3.5 0.5H9.5L11 2V8H3.5ZM5 1V3H9V1ZM5 5V7.5H9.5V5Z" /><path d="M2 11.5H12M5 10V13.5M7 9V14M9 10V13.5" stroke="currentColor" strokeWidth={1.2} /></svg></Btn>
            <Btn><MessageCircleMore /></Btn>
          </div>
          <div className="ml-auto mr-[5px] flex gap-[2px]">
            {['M4 10H9', 'M3 6H8V10H3ZM5 6V4H10V8H8', 'M3 3L10 10M10 3L3 10'].map((d) => (
              <div key={d} className="w-[12px] h-[12px] bg-[#414a50] border border-[#323a40] flex items-center justify-center [&>svg]:w-[10px] [&>svg]:h-[10px]">
                <Ico d={d} />
              </div>
            ))}
          </div>
        </div>
        <div className="flex items-center h-[27px]">
          <div className="ml-[8px] w-[115px] relative flex items-center h-5">
            <div className="w-full h-[3px] bg-linear-to-b from-[#e98a91] to-[#b8626a]" />
            <div className="absolute left-[44px] w-[11px] h-[11px] rounded-full bg-[#2a3035] border border-[#50585e] flex justify-center items-center">
              <div className="w-px h-[6px] bg-[#b7c0c4]" />
            </div>
          </div>
          <div className="ml-[9px] flex gap-[2px]">
            <Btn on><svg viewBox="0 0 14 14" fill="none" stroke="currentColor" strokeWidth={1.5}><path d="M0 4H6M0 6.5H6M0 9H6" strokeDasharray="1.5 0.6" /><path d="M7.5 4V9.3H13.3V4M10.4 4V9" /></svg></Btn>
            <Btn><ArrowRight strokeWidth={4.5} /></Btn>
            <Btn><Ico fill d="M2.5 9.5A1.5 1.5 0 1 1 5 11.2L7 9.5L7.5 7L9 6L8.7 3.4A1.4 1.4 0 1 1 11 4.5L10.3 7.3L8.3 9L6.5 11.5L4 12.4Z" /></Btn>
            <Btn on><Link /></Btn>
            <Btn><svg viewBox="0 0 14 14" fill="currentColor"><path d="M5 1H9V4H5ZM4.5 5H9.5V7H4.5Z" /><path d="M3.8 8H10.2L12.5 9.5Q12.5 12.5 7 12.5Q1.5 12.5 1.5 9.5Z" /></svg></Btn>
          </div>
          <Arch className="ml-[4px] w-[8px] h-[8px] text-[#444c52]" />
          <div className="ml-[3px] w-[42px] h-[15px] bg-[#2e353a] border border-[#3d454b] flex items-center justify-between px-[2px] text-[8px]">
            <span className="origin-left scale-x-90">(none)</span><Triangle className="w-[3px] h-[5px] text-[#69757b]" />
          </div>
          <div className="ml-[7px] w-[11px] h-[19px] bg-[#373f45] rounded-[2px] border border-[#2a3136] flex items-center justify-center"><Triangle className="w-[3px] h-[5px]" /></div>
          <div className="w-[63px] h-[18px] bg-[#c4d0d8] text-[#2b333a] flex items-center justify-end pr-px">
            <span className="text-[12px] origin-right scale-x-[0.74] whitespace-nowrap">Pattern 1<span className="text-[#7f8d95]"> :</span></span>
          </div>
          <div className="w-[11px] h-[19px] bg-[#373f45] rounded-[2px] border border-[#2a3136] flex items-center justify-center text-[9px]">+</div>
          <div className="ml-[5px] flex gap-[2px]">
            <Btn><svg viewBox="0 0 14 14" fill="none" stroke="currentColor" strokeWidth={1.3}><path d="M1 4.5H13V12.5H1ZM1 6.5H13M3 10.5H6L8 9H11" /><path d="M5 0.5H9L7 2.8Z" fill="currentColor" stroke="none" /></svg></Btn>
            <Btn><svg viewBox="0 0 14 14" fill="none" stroke="currentColor" strokeWidth={1.8}><path d="M0.5 3H5V11H0.5M1 7H5M6.5 9.5H8.5M8.5 7H10.5M10.8 4.5H13" /></svg></Btn>
            <Btn><Ico d="M2 1.5H9V4.2H2ZM2 5.7H9V8.4H2ZM2 9.9H9V12.6H2ZM11.5 1V13" /></Btn>
            <Btn><Ico d="M3 1V6M3 9V13M7 1V3M7 8V13M11 1V6M11 9V13M1.8 6H4.2V9H1.8ZM5.8 4H8.2V7.5H5.8ZM9.8 6H12.2V9H9.8Z" /></Btn>
            <Btn><Ico d="M2 1H5V3.5H2ZM3.5 3.5V12H7M3.5 8H7M8 8H12M9.5 6.5V9.5M8 12H12M9.5 10.5V13.5" /></Btn>
            <Btn><Ico fill d="M2 1H7V3H4.5V10H2ZM5.5 4H9.5L12 6.5V13H5.5Z" /></Btn>
            <Btn><Plug fill="currentColor" /></Btn>
            <Btn><svg viewBox="0 0 14 14" fill="none" stroke="currentColor" strokeWidth={1.6}><path d="M7 3L4.5 6L7.5 8.5L7 12M4.8 7L3.5 12M5 5L12 12M2 13H13" /><circle cx={8} cy={2} r={0.8} fill="currentColor" /></svg></Btn>
            <Btn><Pointer fill="currentColor" className="rotate-[125deg]" /></Btn>
            <div className="[&>div]:bg-[#5a7671]"><Btn><Download strokeWidth={3} /></Btn></div>
          </div>
          <div className="ml-[2px] w-[110px] h-[22px] bg-[#566f6b] border border-[#4a605d] pl-[2px] pr-[2px] text-[8px] leading-[10px] flex items-center justify-between">
            <div className="whitespace-nowrap origin-left scale-x-[0.9]">
              <div><span className="text-[#9db2ae]">26.10</span>&nbsp; FL STUDIO 20.7.3</div>
              <div>Released</div>
            </div>
            <Triangle className="w-[3px] h-[5px] text-[#94a9a5]" />
          </div>
          <div className="ml-[3px] w-px h-[27px] bg-[#4c545b]" />
        </div>
      </div>
    </div>
  )
}

function PlaylistHeader() {
  return (
    <div className="h-[17px] bg-[#434b51] border-t border-[#363e44] pl-[13px] pr-[4px] flex items-center text-[#dfe5e8] [&_svg]:h-[10px]">
      <div className="w-[10px] flex items-center [&>svg]:h-[5px]"><Triangle className="w-[3px]" /></div>
      <Arch className="w-[10px] text-[#5fe28b]" />
      <div className="ml-[12px] flex gap-[4.1px] [&>svg]:w-[10px]">
        <Pencil className="-scale-x-100" /><Paintbrush className="text-[#65aee6] -scale-x-100" fill="#65aee6" /><Ban /><VolumeX fill="currentColor" /><MoveHorizontal strokeWidth={3} />
        <svg viewBox="0 0 14 14" fill="currentColor"><path d="M1 1H13V13L8 10V5L4 6Z" /></svg>
        <Maximize /><Search className="-scale-x-100" /><Volume2 fill="currentColor" />
      </div>
      <svg className="ml-[12px] w-[10px] text-[#aef04e]" viewBox="0 0 10 10" fill="none" stroke="currentColor" strokeWidth={1.2}><path d="M0.5 3.5H2L4.7 1V9L2 6.5H0.5ZM6.8 2.5V7.5L9.5 5Z" /></svg>
      <span className="ml-[4px] text-[9.5px] leading-[14px] origin-left scale-x-[0.93] whitespace-nowrap">
        Playlist - Arrangement <span className="text-[#8b979d] text-[8px]">›</span>&nbsp; Pattern 1 &nbsp;<span className="text-[#8b979d] text-[8px]">›</span>
      </span>
      <div className="ml-auto flex gap-[4px] items-center [&>svg]:w-[10px]">
        <Ico d="M3 5H9" /><Ico d="M2 6H9V12H2ZM5 6V3H12V9H9" /><X strokeWidth={3} />
      </div>
    </div>
  )
}

const mapColors = ['#857a8c', '#6f8683', '#8f727c', '#727787', '#7f8992', '#5f7f8a']

function MiniMap() {
  return (
    <div className="flex h-[13px] bg-[#373f45] text-[#202629]">
      <div className="w-[14px] bg-[#4c555b] flex items-center justify-center"><ChevronLeft size={9} /></div>
      <div className="relative">
        <svg className="block bg-[#65707a]" width={1012} height={13}>
          {Array.from({ length: 6 }, (_, r) =>
            Array.from({ length: 15 }, (_, i) => (
              <rect key={`${r}-${i}`} x={i * 68 + rnd(i + r * 5) * 30} y={1 + r * 2} width={40 + rnd(i * r + 3) * 40} height={1.4} fill={mapColors[Math.floor(rnd(i + r * 20) * 6)]} />
            )),
          )}
          <path d="M0 3.5H380M700 6.5H970" stroke="#a5586e" strokeWidth={0.8} />
          <path d="M0 11H1012" stroke="#507e8d" strokeWidth={1.2} />
        </svg>
        <div className="absolute left-[446px] top-0 w-[2px] h-[12px] bg-[#e6ee55]" />
      </div>
      <div className="flex-1 relative">
        <div className="absolute top-px w-[14px] h-px bg-[#69776c]" />
        <div className="absolute top-[7px] w-[28px] h-px bg-[#55666a]" />
      </div>
      <div className="w-[13px] bg-[#4c555b] flex items-center justify-center"><ChevronRight size={9} /></div>
    </div>
  )
}

function Taskbar() {
  const app = 'w-8 h-[27px] flex items-center justify-center'
  const running = 'border-b-2 border-[#5b9bd0]'
  return (
    <div className="h-[27px] bg-[#1c1c1c] flex items-center text-white relative z-10">
      <div className={app}><svg className="w-[11px] h-[11px]" viewBox="0 0 12 12" fill="#fff"><path d="M0 1.6L5 1V5.6H0ZM5.7 .9L12 0V5.6H5.7ZM0 6.3H5V11L0 10.3ZM5.7 6.3H12V12L5.7 11.1Z" /></svg></div>
      <div className={app}><Search className="w-[12px] h-[12px] -scale-x-100" /></div>
      <div className={clsx('ml-[4px] w-[27px] h-[27px] flex items-center justify-center', running)}>
        <svg className="w-[15px] h-[14px]" viewBox="0 0 15 14"><path d="M0 0H6L7 2H15V13H0Z" fill="#f3cb5a" /><path d="M0 4H15V6H0Z" fill="#fbe394" /><path d="M3 14V8H12V14H9V11H6V14Z" fill="#419bd8" /></svg>
      </div>
      <div className={clsx(app, 'ml-[3px]')}><Chrome /></div>
      <div className={clsx(app, 'bg-[#454545] ml-px', running)}>
        <svg className="w-[10px] h-[15px]" viewBox="0 0 12 17"><path d="M6 6Q4 3 5 0Q7 2 7 4Q9 2 11 3Q10 6 7 7Z" fill="#56a63b" /><path d="M3 6Q8 4 11 8Q11 14 5 17Q-1 12 3 6Z" fill="#e8641f" /><path d="M3 6Q6 6 5 10Q5 14 5 17Q-1 12 3 6Z" fill="#fbb444" /></svg>
      </div>
      <div className={clsx('ml-[4px] w-[27px] h-[27px] flex items-center justify-center relative', running)}>
        <Chrome />
        <div className="absolute right-[3px] bottom-[2px] w-[9px] h-[9px] rounded-full bg-[#d93c2e] text-[5.5px] leading-[9px] text-center">Sz</div>
      </div>
      <div className={clsx('ml-[5px] w-[27px] h-[27px] flex items-center justify-center', running)}>
        <svg className="w-[16px] h-[16px]" viewBox="0 0 16 16" fill="none" stroke="#d8d8d8"><circle cx={8} cy={8} r={7.2} /><path d="M8 8Q4 7 5 3M8 8Q11 5 13 9M8 8Q8 12 4 12" strokeWidth={1.6} /></svg>
      </div>
      <div className="ml-auto mr-[4px] text-[8.5px] leading-[12px] text-right">
        <div className="mr-[9px] origin-right scale-x-[0.85]">00:40</div>
        <div className="origin-right scale-x-[0.85]">08.01.2021</div>
      </div>
    </div>
  )
}

function Chrome() {
  return (
    <svg className="w-[15px] h-[15px]" viewBox="0 0 16 16">
      <circle cx={8} cy={8} r={8} fill="#f8c93c" />
      <path d="M8 8L1 4A8 8 0 0 1 15 4H8Z" fill="#e34a3b" />
      <path d="M8 8L1 4A8 8 0 0 0 8 16L11 10Z" fill="#3fa757" />
      <circle cx={8} cy={8} r={3.8} fill="#fff" />
      <circle cx={8} cy={8} r={3} fill="#4587ee" />
    </svg>
  )
}

export default function App() {
  return (
    <div className="w-[1280px] h-[720px] overflow-hidden flex flex-col bg-[#3a4248] font-['Noto_Sans',sans-serif] select-none">
      <TopBar />
      <PlaylistHeader />
      <div className="flex h-[27px]">
        <div className="w-[80px] pl-[6px]">
          <div className="h-full bg-[#505a60] [clip-path:polygon(12px_0,100%_0,100%_100%,0_100%)] text-[#778288]">
            <div className="flex justify-end gap-[8px] pr-[4px] pt-[2px] [&>svg]:w-[11px] [&>svg]:h-[10px]">
              <Ico d="M1 7H13M3 5V9M5 4V10M7 1V13M9 4V10M11 5V9" /><Ico d="M2 11L6 6L9 7L12 3" />
              <svg viewBox="0 0 11 10"><path d="M0 0H11V10H0Z" fill="#e8eef0" /><path d="M2.7 0V6M5.5 0V6M8.3 0V6M3.7 5V10M7.3 5V10" stroke="#4b555b" strokeWidth={1.1} /></svg>
            </div>
            <div className="flex justify-end gap-[3px] pr-[3px] text-[5px] leading-[8px] mt-[4px]">
              <span className="text-[#dce3e5] font-semibold">NOTE</span><span>CHAN</span><span>PAT</span>
            </div>
          </div>
        </div>
        <div className="w-[1186px]">
          <div className="pt-px"><MiniMap /></div>
          <div className="relative h-[13px] bg-linear-to-b from-[#a8545e] to-[#964851] flex overflow-hidden text-[7.5px] leading-[14px] text-[#f1d8da] font-medium">
            {Array.from({ length: 37 }, (_, i) => (
              <div key={i} className="w-[32.5px] shrink-0 pl-px"><span className="inline-block origin-left scale-x-[0.84]">{i * 4 + 1}</span></div>
            ))}
            <svg className="absolute left-[519px] top-0" width={12} height={9}><path d="M0.8 1H11.2V4L6 8.5L0.8 4Z" fill="#bdf04d" stroke="#48601c" /></svg>
          </div>
        </div>
        <div className="w-[14px] pl-px flex flex-col gap-px text-[#202629]">
          <div className="h-[13px] bg-[#48525a] text-center text-[8px] leading-[12px]">•</div>
          <div className="h-[13px] bg-[#48525a] flex items-center justify-center"><ChevronUp size={10} /></div>
        </div>
      </div>

      <div className="flex h-[595px] overflow-hidden">
        <div className="w-[5px] bg-[#3e4950] border-r border-[#2c343a]" />
        <div className="w-[1261px]">
          {tracks.map((track, i) => (
            <div key={track.name} className="flex h-[28px]">
              <div className={clsx('w-[71px] h-[27px] ml-px relative text-[#dce2e4] rounded-r-[3px]', i === 10 ? 'bg-[#5a5773]' : 'bg-linear-to-b from-[#505c61] to-[#4a555b]')}>
                <div className="text-[9.5px] leading-[12px] pl-px origin-left scale-x-[0.81] whitespace-nowrap">{track.name}</div>
                <div className="absolute left-[9px] bottom-[2px] text-[6px] leading-[4px] text-[#2f383d]">....</div>
                {i === 10 && <svg className="absolute right-[14px] bottom-[2px] w-[10px] h-[10px]" viewBox="0 0 14 14" stroke="#e8e8f0" strokeWidth={1.5}><path d="M0 7H14M4 4V10M7 1V13M10 4V10" /></svg>}
                <div className="absolute right-[4px] bottom-[2.5px] w-[7px] h-[7px] rounded-full bg-[#b4ea5c] border-[1.5px] border-[#517a2e]" />
              </div>
              <div className="w-[3px] h-[27px] bg-[#272d31] pl-px"><div className={clsx('w-[2px] h-full', i === 10 ? 'bg-[#8787bd]' : track.lit ? 'bg-[#aebfc8]' : 'bg-[#333a3f]')} /></div>
              <div className="relative w-[1186px] h-[28px] border-b border-[#202226] overflow-hidden bg-[repeating-linear-gradient(90deg,#292a2f_0_1px,transparent_1px_8.125px),repeating-linear-gradient(90deg,#3b3c41_0_130px,#404146_130px_260px)]">
                {track.clips.map((clip, k) => <TrackClip key={k} clip={clip} />)}
              </div>
            </div>
          ))}
        </div>
        <div className="w-[14px] ml-px bg-[#333d44] flex flex-col justify-between">
          <div className="h-[21px] bg-[#48535b]" />
          <div className="h-[13px] bg-[#48535b] flex items-center justify-center text-[#202629]"><ChevronDown size={10} /></div>
        </div>
        {/* song position line */}
        <div className="absolute left-[599px] top-[98px] w-[10px] h-[595px] bg-linear-to-r from-[#a0e040]/5 via-[#a0e040]/40 to-[#a0e040]/5">
          <div className="ml-[5px] w-[2px] h-full bg-[#a9cf62]" />
        </div>
      </div>
      <Taskbar />
    </div>
  )
}
